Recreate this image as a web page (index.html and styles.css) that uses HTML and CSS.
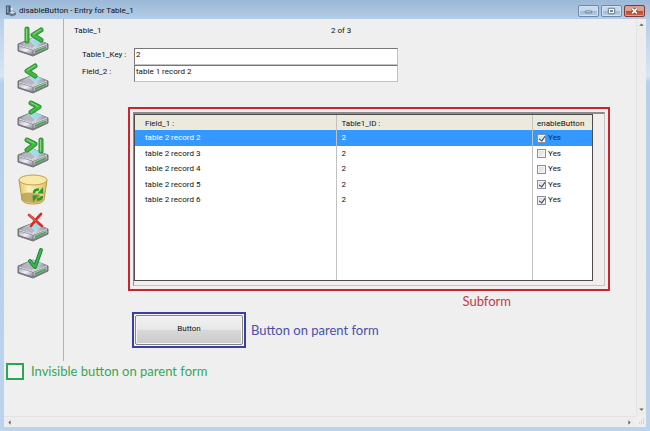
FILE: index.html
```html
<!DOCTYPE html>
<html lang="en">
<head>
<meta charset="utf-8">
<title>disableButton - Entry for Table_1</title>
<link rel="stylesheet" href="styles.css">
</head>
<body>
<svg class="defs" aria-hidden="true">
  <defs>
    <linearGradient id="side" x1="0" y1="0" x2="1" y2="1"><stop offset="0" stop-color="#a9a9b4"/><stop offset=".5" stop-color="#f1effc"/><stop offset="1" stop-color="#88888f"/></linearGradient>
    <linearGradient id="lid" x1="0" y1="0" x2="1" y2="0"><stop offset="0" stop-color="#8f9098"/><stop offset=".5" stop-color="#d2e6ec"/><stop offset="1" stop-color="#888b95"/></linearGradient>
    <linearGradient id="bin" x1="0" y1="0" x2="1" y2="0"><stop offset="0" stop-color="#e3c565"/><stop offset=".35" stop-color="#fbf0bd"/><stop offset="1" stop-color="#e0c468"/></linearGradient>
    <g id="drive">
      <path d="M1 18 L16 12 L31 18 V23 L16 30 L1 25Z" fill="#7c7c82" stroke="#737379" stroke-linejoin="round"/>
      <path d="M1.500 18.500 L16 12 L30.500 17.500 L16 23Z" fill="url(#lid)"/>
      <path d="M14 14 L19 13 L25 16 L17 19Z" fill="#9bdde9"/>
      <path d="M5 18 L13 15 L18 20 L15 22Z" fill="#b8b6c4"/>
      <path d="M2 20 L15.500 24.500 V28.500 L2 24Z" fill="url(#side)"/>
      <path d="M16.500 24.500 L30 19 V22 L16.500 28Z" fill="#b5bbbb"/>
      <path d="M18 25 L29 20.500 V22 L18 27Z" fill="#43a64e"/>
      <path d="M2 19 L16 23.500 L30 18" fill="none" stroke="#f3f3f8" stroke-width=".8"/>
    </g>
  </defs>
</svg>
<div class="window">
  <header class="titlebar">
    <svg class="app-icon" viewBox="0 0 12 12" aria-hidden="true"><path d="M1 0H6V10H1Z" fill="#3b5368"/><path d="M2 1H4V8H2Z" fill="#7aa6c8"/><path d="M4 8L8 5L12 8V10L8 12L3 10Z" fill="#6d7a86"/><path d="M5 8L8 6L11 8L8 9Z" fill="#e2e8ee"/><path d="M6 3L8 2L9 5L7 6Z" fill="#dbe6ee"/></svg>
    <h1>disableButton - Entry for Table_1</h1>
    <div class="controls">
      <button type="button" aria-label="Minimize"><svg viewBox="0 0 20 11"><rect x="6.500" y="5.500" width="7" height="2" rx=".5" fill="#fff" stroke="#56687b"/></svg></button>
      <button type="button" aria-label="Maximize"><svg viewBox="0 0 20 11"><rect x="6.500" y="2.500" width="7" height="6" rx=".5" fill="#fff" stroke="#56687b"/><rect x="8.500" y="4.500" width="3" height="2" fill="#56687b"/></svg></button>
      <button type="button" class="close" aria-label="Close"><svg viewBox="0 0 20 11"><path d="M7.500 3L12.500 8M12.500 3L7.500 8" stroke="#7a3b38" stroke-width="3.600"/><path d="M7.500 3L12.500 8M12.500 3L7.500 8" stroke="#fff" stroke-width="2"/></svg></button>
    </div>
  </header>
  <div class="client">
    <div class="form">
      <div class="columns">
        <nav class="toolbar" aria-label="Records">
          <button type="button" aria-label="First record"><svg viewBox="0 0 32 31"><use href="#drive"/><path d="M10 3V15M24 4L16 9L24 14" class="arrow-edge"/><path d="M10 3V15M24 4L16 9L24 14" class="arrow"/><path d="M9.500 3V14.500M24 3.500L16 8.500" class="shine"/></svg></button>
          <button type="button" aria-label="Previous record"><svg viewBox="0 0 32 31"><use href="#drive"/><path d="M18 3L10 8L18 13" class="arrow-edge"/><path d="M18 3L10 8L18 13" class="arrow"/><path d="M18 2.500L10 7.500" class="shine"/></svg></button>
          <button type="button" aria-label="Next record"><svg viewBox="0 0 32 31"><use href="#drive"/><path d="M14 3L22 7L14 12" class="arrow-edge"/><path d="M14 3L22 7L14 12" class="arrow"/><path d="M14 2.500L21 6.500" class="shine"/></svg></button>
          <button type="button" aria-label="Last record"><svg viewBox="0 0 32 31"><use href="#drive"/><path d="M10 3L18 7L10 13M24 3V14" class="arrow-edge"/><path d="M10 3L18 7L10 13M24 3V14" class="arrow"/><path d="M10 2.500L17 6.500M23.500 3V14" class="shine"/></svg></button>
          <button type="button" aria-label="Delete record"><svg viewBox="0 0 32 31"><path d="M2 6L5 26Q7 30 16 30Q25 30 27 26L30 6Z" fill="url(#bin)" stroke="#b89b43"/><path d="M4 20Q10 17 22 20L26 26Q23 29 16 29Q8 29 5 26Z" fill="#b49c4b" opacity=".8"/><ellipse cx="16" cy="6" rx="14" ry="5" fill="#f8e9a9" stroke="#bea24c"/><path d="M17 19Q17 15.500 22 15.500M25 22Q25 25.500 20 25.500" fill="none" stroke="#2b9c27" stroke-width="2.600"/><path d="M20.500 19.500L26.500 19.500L26 13ZM21.500 21.500L15.500 21.500L16 28Z" fill="#2b9c27"/></svg></button>
          <button type="button" aria-label="Cancel changes"><svg viewBox="0 0 32 31"><use href="#drive"/><path d="M12 4Q18 9 25 15M24 3Q18 9 14 15" fill="none" stroke="#d92c26" stroke-width="2.600" stroke-linecap="round"/><path d="M12 4Q16 7 19 10" fill="none" stroke="#f0827a" stroke-width=".8"/></svg></button>
          <button type="button" aria-label="Save record"><svg viewBox="0 0 32 31"><use href="#drive"/><path d="M13 13L18 19L24 2" fill="none" stroke="#188135" stroke-width="3.800" stroke-linecap="round" stroke-linejoin="round"/><path d="M13 13L18 19L24 2" fill="none" stroke="#42b34d" stroke-width="2" stroke-linecap="round" stroke-linejoin="round"/></svg></button>
        </nav>
        <main class="entry">
          <div class="heading"><h2>Table_1</h2><span>2 of 3</span></div>
          <div class="fields">
            <label for="key">Table1_Key :</label><input id="key" type="text" value="2">
            <label for="field2">Field_2 :</label><input id="field2" type="text" value="table 1 record 2">
          </div>
          <section class="red-frame" aria-label="Subform">
            <div class="subform">
              <div class="sheet">
                <table>
                  <colgroup><col class="c1"><col class="c2"><col class="c3"></colgroup>
                  <thead><tr><th>Field_1 :</th><th>Table1_ID :</th><th>enableButton</th></tr></thead>
                  <tbody>
                    <tr class="selected"><td>table 2 record 2</td><td>2</td><td><label><input type="checkbox" checked>Yes</label></td></tr>
                    <tr><td>table 2 record 3</td><td>2</td><td><label><input type="checkbox">Yes</label></td></tr>
                    <tr><td>table 2 record 4</td><td>2</td><td><label><input type="checkbox">Yes</label></td></tr>
                    <tr><td>table 2 record 5</td><td>2</td><td><label><input type="checkbox" checked>Yes</label></td></tr>
                    <tr><td>table 2 record 6</td><td>2</td><td><label><input type="checkbox" checked>Yes</label></td></tr>
                    <tr class="empty"><td></td><td></td><td></td></tr>
                  </tbody>
                </table>
              </div>
            </div>
          </section>
          <p class="note red">Subform</p>
          <div class="action">
            <div class="blue-frame"><button type="button" class="push">Button</button></div>
            <p class="note blue">Button on parent form</p>
          </div>
        </main>
      </div>
      <div class="hidden-action">
        <button type="button" class="green-frame" aria-label="Invisible button"></button>
        <p class="note green">Invisible button on parent form</p>
      </div>
    </div>
    <div class="vbar" aria-hidden="true"><svg viewBox="0 0 6 4"><path d="M0 3.500L3 .5L6 3.500Z"/></svg><svg viewBox="0 0 6 4"><path d="M0 .5H6L3 3.500Z"/></svg></div>
    <div class="hbar" aria-hidden="true"><svg viewBox="0 0 4 6"><path d="M3.500 0V6L.5 3Z"/></svg><svg viewBox="0 0 4 6"><path d="M.5 0V6L3.500 3Z"/></svg></div>
    <svg class="grip" viewBox="0 0 10 10" aria-hidden="true"><path d="M7 2h1v1H7zM5 4h1v1H5zM7 4h1v1H7zM3 6h1v1H3zM5 6h1v1H5zM7 6h1v1H7z"/></svg>
  </div>
</div>
</body>
</html>
```
FILE: styles.css
```css
* { box-sizing: border-box; }

body {
  margin: 0;
  font: 8px/12px Roboto, "Open Sans", sans-serif;
  color: #111;
}

h1, h2, p { margin: 0; font-size: inherit; font-weight: normal; }
button, input { font: inherit; color: inherit; margin: 0; }
svg { display: block; }
.defs { position: absolute; width: 0; height: 0; }

.window {
  display: flex;
  flex-direction: column;
  min-height: 100vh;
  padding: 0 4px 4px;
  background: linear-gradient(#a5bfdc 0, #b8cfea 20px, #d8e6f5 76px, #b5cfec 82px, #bcd3ee);
}

.titlebar {
  display: flex;
  align-items: center;
  height: 19px;
  margin: 0 -4px;
  padding: 3px 5px 0;
  background: linear-gradient(#9bb8d7, #b4cde8);
}
.app-icon { width: 11px; height: 12px; }
.titlebar h1 { margin-left: 3px; }
.controls { display: flex; gap: 2px; margin-left: auto; }
.controls button {
  width: 21px;
  height: 12px;
  padding: 0;
  border: 1px solid #6d88a8;
  border-radius: 2px;
  background: linear-gradient(#c6d8ec 45%, #9fb9d7 50%, #b7cfe7);
  box-shadow: inset 0 0 0 1px #d4e2f1;
}
.controls button svg { width: 19px; height: 10px; }
.controls .close {
  border-color: #783b40;
  background: linear-gradient(#dfa092 45%, #c5452c 50%, #ce6a4c);
  box-shadow: inset 0 0 0 1px #dc9e90;
}

.client {
  flex: 1;
  display: grid;
  grid-template-columns: minmax(0, 1fr) 10px;
  grid-template-rows: 1fr 11px;
  background: #efefef;
}
.columns { display: flex; }

.toolbar {
  display: flex;
  flex-direction: column;
  gap: 6px;
  width: 60px;
  padding: 7px 13px 0;
  border-right: 1px solid #b3b3b3;
}
.toolbar button { width: 32px; height: 31px; padding: 0; border: 0; background: none; }
.toolbar svg { width: 32px; height: 31px; }
.arrow-edge, .arrow, .shine { fill: none; stroke-linecap: round; stroke-linejoin: round; }
.arrow-edge { stroke: #2b8f38; stroke-width: 5; }
.arrow { stroke: #43b843; stroke-width: 3; }
.shine { stroke: #8bd878; stroke-width: 1; }

.entry { flex: 1; min-width: 0; padding: 6px 26px 13px 10px; }
.heading { display: grid; grid-template-columns: 257px 1fr; }
.fields {
  display: grid;
  grid-template-columns: 52px minmax(0, 264px);
  grid-auto-rows: 17px;
  margin: 11px 0 0 8px;
}
.fields label { line-height: 13px; }
.fields input {
  min-width: 0;
  padding: 0 1px 4px;
  border: 1px solid #c2c2c2;
  border-top-color: #777;
  border-left-color: #777;
  border-radius: 0;
  background: #fff;
}

.red-frame {
  margin: 25px 0 0 54px;
  padding: 3px;
  border: 2px solid #c9252d;
  background: #f3eeee;
}
.subform {
  padding: 0 11px 4px 0;
  border: 1px solid #c5c5c5;
  border-top: 2px solid #8b8b8b;
  border-left-color: #8b8b8b;
}
.sheet { border: 1px solid #4d4d4d; background: #fff; }
table { width: 100%; border-collapse: collapse; table-layout: fixed; }
.c1 { width: 44.2%; }
.c2 { width: 42.8%; }
.c3 { width: 13%; }
th, td { padding: 0 0 0 4px; border-left: 1px solid #c1c1c1; text-align: left; font-weight: normal; white-space: nowrap; }
th:first-child, td:first-child { padding-left: 10px; border-left: 0; }
th { height: 15px; padding-top: 2px; background: #eceadc; }
td { height: 15px; }
tbody tr:nth-child(odd) td { height: 16px; }
tbody tr.empty:nth-child(even) td { height: 72px; }
.selected { background: #3398ff; color: #fff; }
.selected label { color: #0b2c55; }
td label { display: flex; align-items: center; gap: 2px; }
td input {
  appearance: none;
  width: 9px;
  height: 9px;
  border: 1px solid #8e8f8f;
  background: linear-gradient(135deg, #d2d5da, #fafafa);
  box-shadow: inset 0 0 0 1px #f4f4f4;
}
td input:checked::before {
  content: "";
  display: block;
  width: 3px;
  height: 5px;
  margin: 0 0 0 2px;
  border: solid #2a3d75;
  border-width: 0 1px 1px 0;
  transform: rotate(35deg);
}

.note { font: 13px/20px Lato, "Open Sans", sans-serif; white-space: nowrap; }
.red { color: #c73a45; padding-right: 99px; text-align: right; }
.blue { color: #4a50a8; }
.green { color: #36a853; }

.action { display: flex; align-items: center; gap: 5px; margin: 1px 0 0 58px; }
.blue-frame { padding: 1px; border: 2px solid #3a3fa5; background: #f5f5fb; }
.push {
  display: block;
  width: 108px;
  height: 30px;
  padding: 0 0 3px;
  border: 1px solid #858585;
  border-radius: 2px;
  background: linear-gradient(#f1f1f1, #e8e8e8 48%, #d8d8d8 50%, #cbcbcb);
  box-shadow: inset 0 0 0 1px #f5f5f5;
}

.hidden-action { display: flex; align-items: center; gap: 7px; padding-left: 2px; }
.green-frame { width: 18px; height: 17px; padding: 0; border: 2px solid #2fa64e; background: #f4f4f4; }

.vbar, .hbar { display: flex; justify-content: space-between; background: #ededee; }
.vbar { flex-direction: column; align-items: center; padding: 4px 0 5px; border-left: 1px solid #e3e3e3; }
.vbar svg { width: 5px; height: 3px; fill: #606060; }
.hbar { align-items: center; padding: 0 5px 0 4px; border-top: 1px solid #e3e3e3; }
.hbar svg { width: 3px; height: 5px; fill: #606060; }
.grip { width: 10px; height: 11px; fill: #bbb; }
```
